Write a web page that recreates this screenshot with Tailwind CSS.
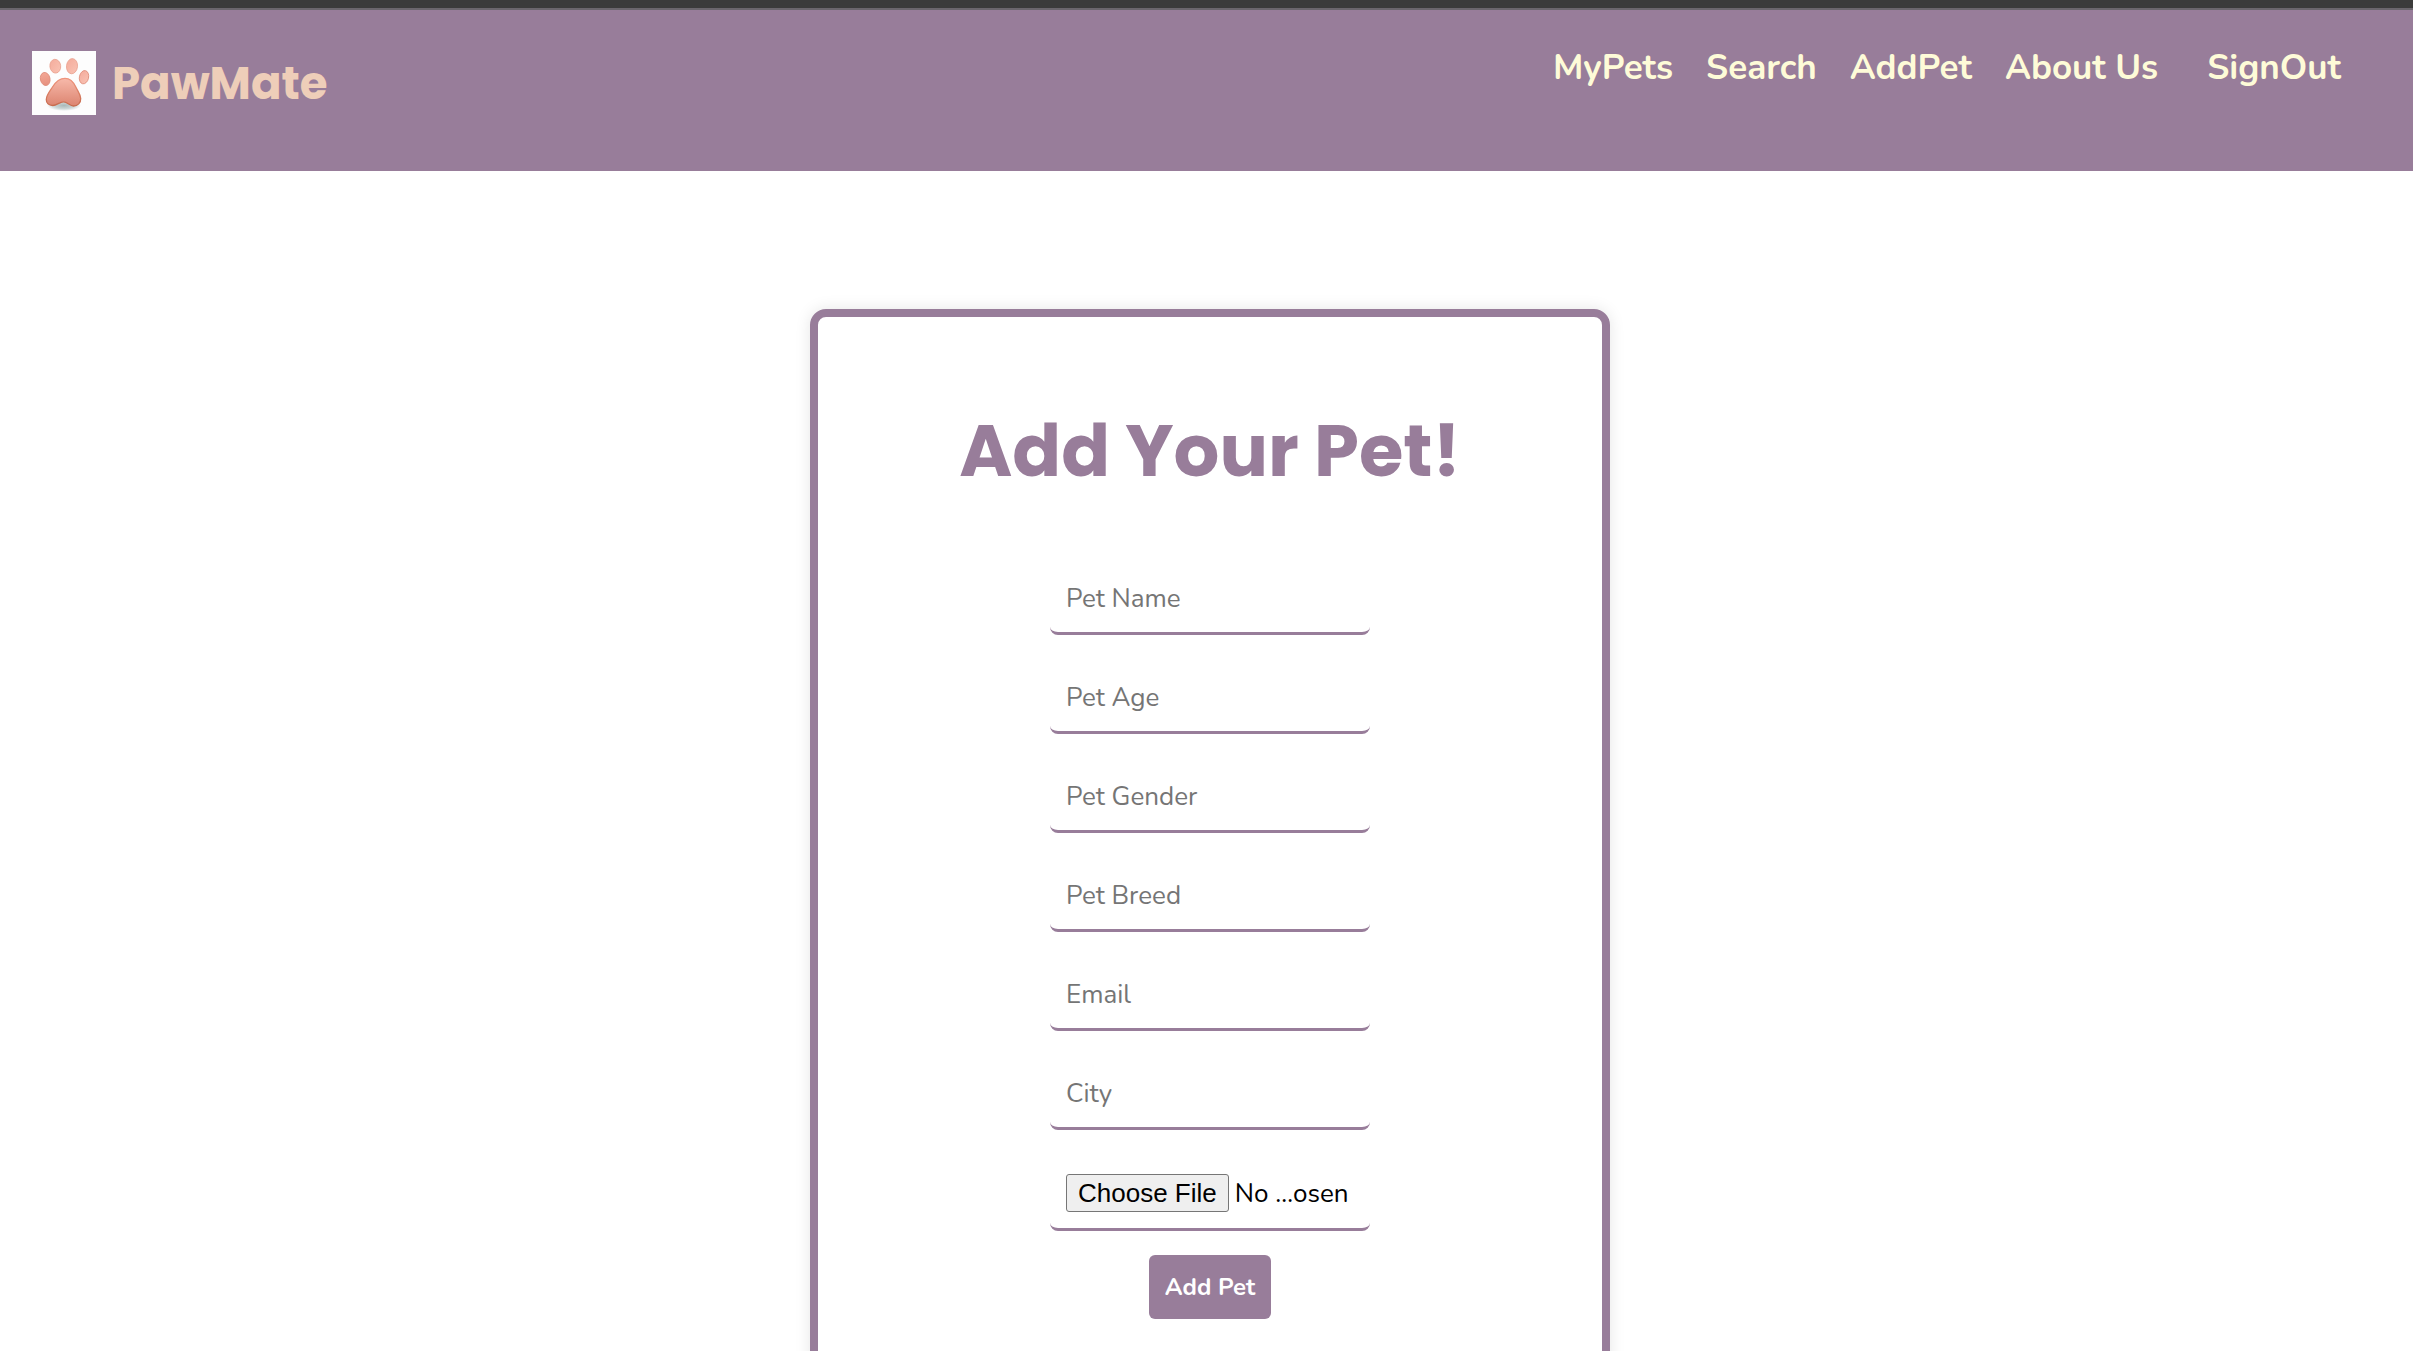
<!DOCTYPE html>
<html lang="en">
<head>
<meta charset="utf-8">
<meta name="viewport" content="width=device-width, initial-scale=1">
<title>PawMate - Add Your Pet</title>
<script src="https://cdn.jsdelivr.net/npm/@tailwindcss/browser@4"></script>
</head>
<body class="bg-white font-['Nunito','Open_Sans',sans-serif] text-black">
  <div class="h-2 bg-[#3b3b3b]"></div>
  <header class="flex h-[163px] items-start justify-between border-t-2 border-[#6b666d] bg-[#987d9a] pl-8 pr-[72px]">
    <a href="#" class="mt-[41px] flex h-16 items-center gap-4">
      <svg class="size-16 bg-[#fdfdfd]" viewBox="0 0 64 64" role="img" aria-label="Paw">
        <defs>
          <linearGradient id="pad" x1="0" y1="0" x2="0" y2="1"><stop offset="0" stop-color="#f7b9aa"/><stop offset="1" stop-color="#dc8470"/></linearGradient>
          <linearGradient id="toe" x1="0" y1="0" x2="1" y2="1"><stop offset="0" stop-color="#f4ab9b"/><stop offset="1" stop-color="#f9c3b4"/></linearGradient>
          <linearGradient id="side" x1="0" y1="0" x2="0" y2="1"><stop offset="0" stop-color="#f3a795"/><stop offset="1" stop-color="#e6917f"/></linearGradient>
          <linearGradient id="edge" x1="0" y1="0" x2="0" y2="1"><stop offset="0" stop-color="#f0957d"/><stop offset="1" stop-color="#c66a4c"/></linearGradient>
          <radialGradient id="shade"><stop offset="0" stop-color="#a9b8b8"/><stop offset=".6" stop-color="#cdd7d7"/><stop offset="1" stop-color="#fdfdfd"/></radialGradient>
        </defs>
        <ellipse cx="32" cy="54.5" rx="17" ry="5.5" fill="url(#shade)"/>
        <path d="M33 27.3c5.500 0 8.800 4.200 10.800 8.700 1.800 4 4.700 7.200 4.900 11.500.2 4.300-3 7.500-7.200 7.500-3.700 0-6-4.200-10-4.200s-6.500 3.700-10.700 3.700c-4 0-6.600-2.300-6.500-6 .1-4.600 3.500-8.200 6.200-12.500 2.800-4.600 6.700-8.700 12.500-8.700z" fill="url(#pad)" stroke="url(#edge)" stroke-width="1.300"/>
        <ellipse cx="23.300" cy="15.200" rx="5.400" ry="6.900" transform="rotate(-6 23.300 15.200)" fill="url(#toe)" stroke="#e9a08f" stroke-width=".8"/>
        <ellipse cx="40" cy="15.200" rx="5.500" ry="7.600" transform="rotate(6 40 15.200)" fill="url(#toe)" stroke="#e9a08f" stroke-width=".8"/>
        <ellipse cx="13.200" cy="28" rx="4.800" ry="6.600" transform="rotate(-12 13.200 28)" fill="url(#side)" stroke="#dd8a77" stroke-width=".8"/>
        <ellipse cx="52" cy="26.200" rx="4.600" ry="6.700" transform="rotate(12 52 26.200)" fill="url(#toe)" stroke="#df8b77" stroke-width=".8"/>
      </svg>
      <span class="font-['Poppins','Inter',sans-serif] text-[45px] font-bold leading-none text-[#eeceb9]">PawMate</span>
    </a>
    <nav class="mt-[34px] flex gap-[33px] text-[35px] font-bold leading-[48px] text-[#fefbd8]">
      <a href="#">MyPets</a>
      <a href="#">Search</a>
      <a href="#">AddPet</a>
      <a href="#">About Us</a>
      <a href="#" class="ml-4">SignOut</a>
    </nav>
  </header>

  <main class="flex justify-center pl-[7px] pt-[138px]">
    <form class="flex w-[800px] flex-col items-center rounded-2xl border-8 border-[#987d9a] px-8 pb-20 pt-20 shadow-[0_0_16px_rgba(0,0,0,0.1)]">
      <h1 class="font-['Poppins','Inter',sans-serif] text-[72px] font-bold leading-[108px] text-[#987d9a]">Add Your Pet!</h1>
      <div class="mt-14 flex w-80 flex-col gap-[25px] text-[26px]">
        <input type="text" aria-label="Pet Name" placeholder="Pet Name" class="h-[74px] w-full rounded-lg border-b-3 border-[#987d9a] px-4 pt-1 placeholder:text-[#757575]">
        <input type="text" aria-label="Pet Age" placeholder="Pet Age" class="h-[74px] w-full rounded-lg border-b-3 border-[#987d9a] px-4 pt-1 placeholder:text-[#757575]">
        <input type="text" aria-label="Pet Gender" placeholder="Pet Gender" class="h-[74px] w-full rounded-lg border-b-3 border-[#987d9a] px-4 pt-1 placeholder:text-[#757575]">
        <input type="text" aria-label="Pet Breed" placeholder="Pet Breed" class="h-[74px] w-full rounded-lg border-b-3 border-[#987d9a] px-4 pt-1 placeholder:text-[#757575]">
        <input type="email" aria-label="Email" placeholder="Email" class="h-[74px] w-full rounded-lg border-b-3 border-[#987d9a] px-4 pt-1 placeholder:text-[#757575]">
        <input type="text" aria-label="City" placeholder="City" class="h-[74px] w-full rounded-lg border-b-3 border-[#987d9a] px-4 pt-1 placeholder:text-[#757575]">
        <input type="file" aria-label="Pet photo" class="h-[76px] w-full rounded-lg border-b-3 border-[#987d9a] px-4 pt-[19px] file:mr-[6px] file:h-[38px] file:rounded-[3px] file:border file:border-solid file:border-[#767676] file:bg-[#efefef] file:px-[11px] file:font-['Liberation_Sans',Arial,sans-serif] file:text-[26px] file:leading-none">
      </div>
      <button type="submit" class="mt-6 h-16 rounded-md bg-[#987d9a] px-4 text-2xl font-bold text-white">Add Pet</button>
    </form>
  </main>
</body>
</html>
